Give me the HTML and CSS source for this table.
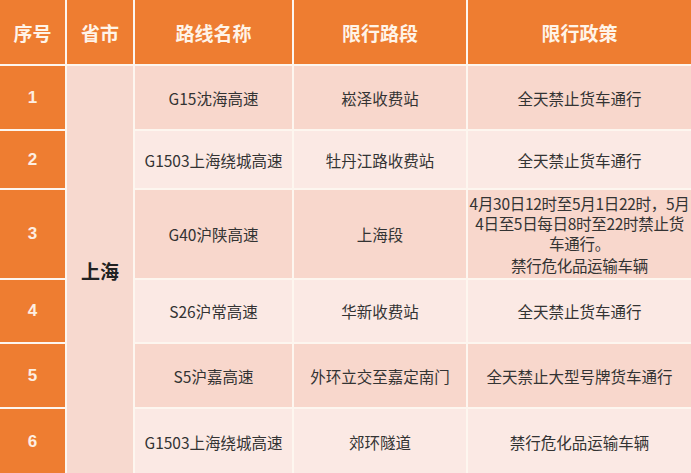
FILE: index.html
```html
<!DOCTYPE html>
<html lang="zh-CN">
<head>
<meta charset="utf-8">
<title>上海限行路段</title>
<link rel="stylesheet" href="styles.css">
</head>
<body>
<div class="table">
  <div class="cell head">序号</div>
  <div class="cell head">省市</div>
  <div class="cell head">路线名称</div>
  <div class="cell head">限行路段</div>
  <div class="cell head">限行政策</div>

  <div class="cell num">1</div>
  <div class="cell city">上海</div>
  <div class="cell odd">G15沈海高速</div>
  <div class="cell odd">崧泽收费站</div>
  <div class="cell odd">全天禁止货车通行</div>

  <div class="cell num">2</div>
  <div class="cell even">G1503上海绕城高速</div>
  <div class="cell even">牡丹江路收费站</div>
  <div class="cell even">全天禁止货车通行</div>

  <div class="cell num">3</div>
  <div class="cell odd">G40沪陕高速</div>
  <div class="cell odd">上海段</div>
  <div class="cell odd multi"><span class="line">4月30日12时至5月1日22时，5月</span><span class="line">4日至5日每日8时至22时禁止货</span><span class="line">车通行。</span><span class="line last">禁行危化品运输车辆</span></div>

  <div class="cell num">4</div>
  <div class="cell even">S26沪常高速</div>
  <div class="cell even">华新收费站</div>
  <div class="cell even">全天禁止货车通行</div>

  <div class="cell num">5</div>
  <div class="cell odd">S5沪嘉高速</div>
  <div class="cell odd">外环立交至嘉定南门</div>
  <div class="cell odd">全天禁止大型号牌货车通行</div>

  <div class="cell num">6</div>
  <div class="cell even">G1503上海绕城高速</div>
  <div class="cell even">郊环隧道</div>
  <div class="cell even">禁行危化品运输车辆</div>
</div>
</body>
</html>
```

FILE: styles.css
```css
html, body {
  margin: 0;
  padding: 0;
  background: #fdf6ef;
}

body {
  width: 691px;
  height: 473px;
  overflow: hidden;
  font-family: "Noto Sans CJK SC", "Noto Sans", sans-serif;
}

.table {
  display: grid;
  grid-template-columns: 65px 66px 157px 172px 223px;
  grid-template-rows: 64px 63px 57px 88px 62px 63px 66px;
  column-gap: 2px;
  row-gap: 2px;
  background: #fdf6ef;
}

.cell {
  display: flex;
  align-items: center;
  justify-content: center;
  text-align: center;
  font-size: 15.5px;
  color: #333333;
}

.head {
  background: #ee7d31;
  color: #fff4e8;
  font-size: 19px;
  font-weight: 700;
}

.num {
  background: #ee7d31;
  color: #fdeee2;
  font-family: "Liberation Sans", Arial, sans-serif;
  font-size: 17px;
  font-weight: 700;
}

.city {
  grid-column: 2;
  grid-row: 2 / span 6;
  background: #f7d9cf;
  color: #222222;
  font-size: 19px;
  font-weight: 700;
}

.odd {
  background: #f8d7cc;
}

.even {
  background: #fbe9e4;
}

.multi {
  flex-direction: column;
  line-height: 20px;
  letter-spacing: -0.3px;
}

.line {
  white-space: nowrap;
}

.last {
  margin-top: 2px;
}
```
